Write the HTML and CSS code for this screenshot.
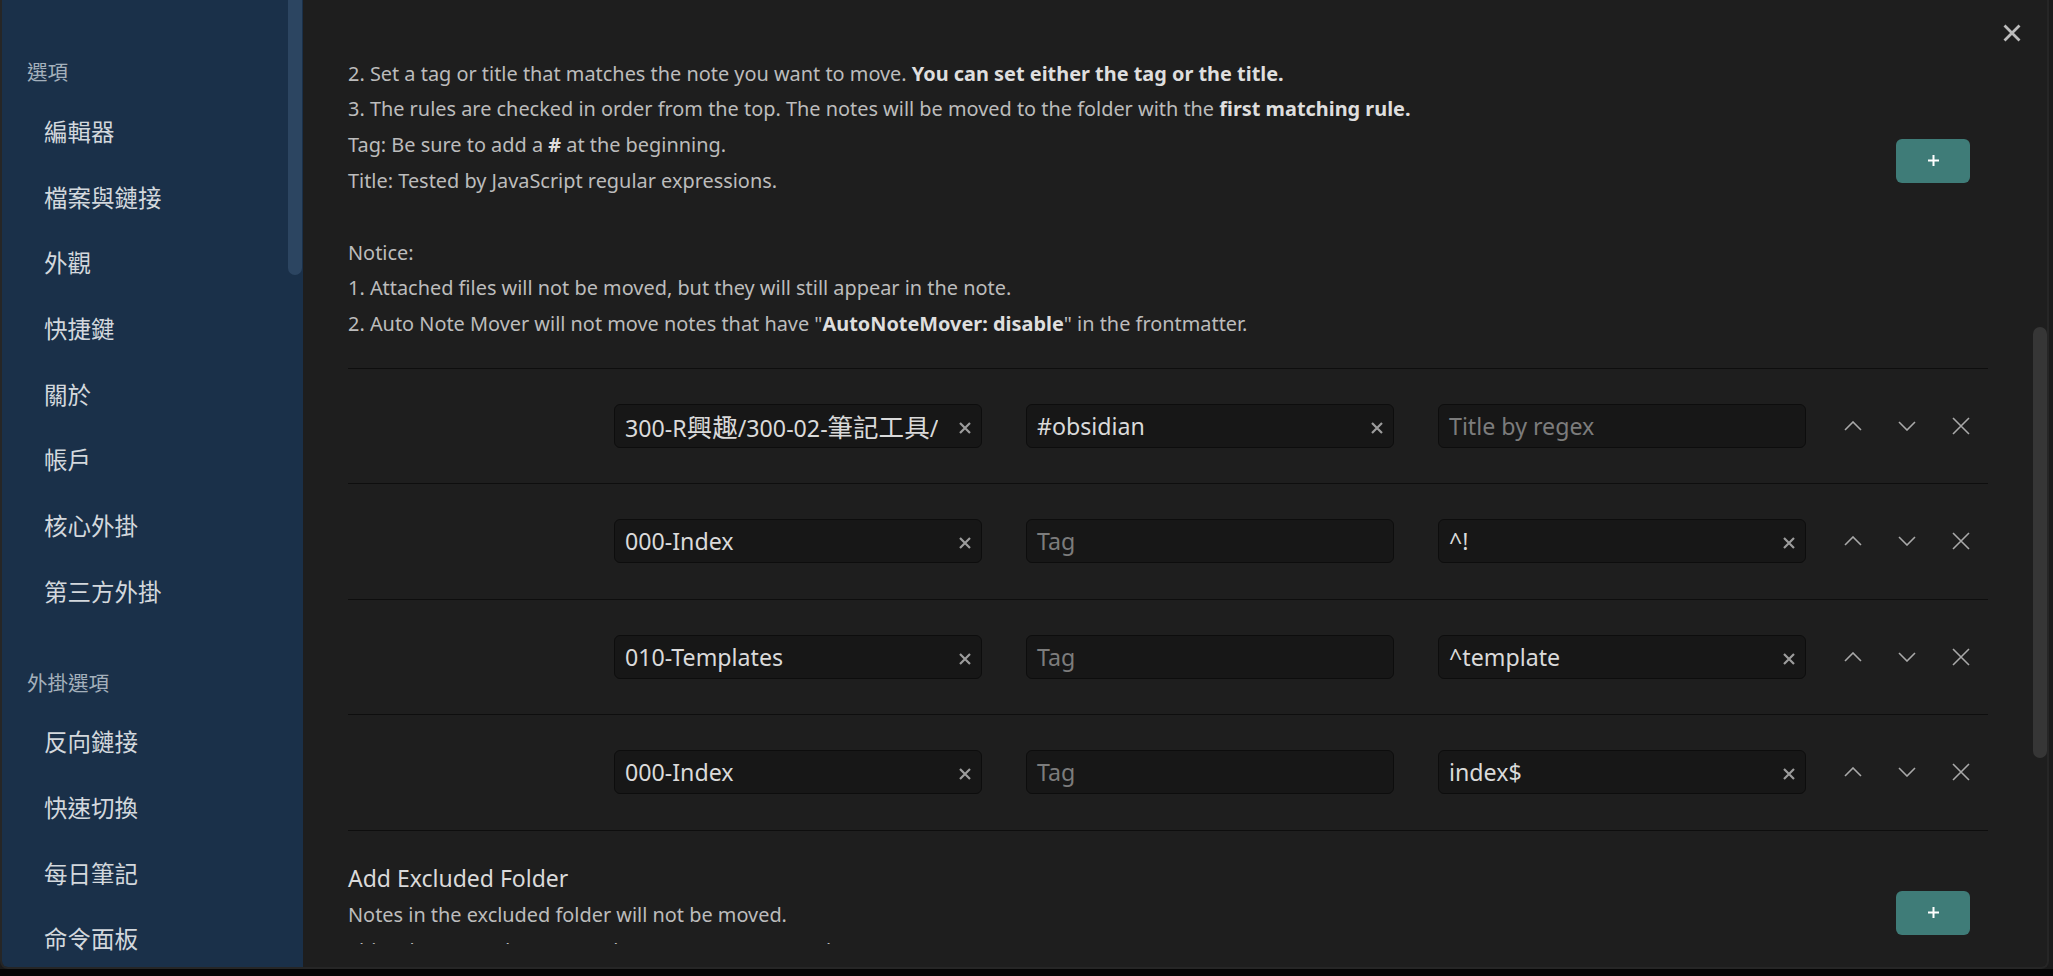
FILE: index.html
```html
<!DOCTYPE html>
<html lang="zh-Hant">
<head>
<meta charset="utf-8">
<title>Settings</title>
<link rel="stylesheet" href="styles.css">
</head>
<body>
<div class="modal">
  <nav class="sidebar">
    <div class="sb-thumb"></div>
    <div class="nav-group first">
      <div class="nav-header">選項</div>
      <div class="nav-item">編輯器</div>
      <div class="nav-item">檔案與鏈接</div>
      <div class="nav-item">外觀</div>
      <div class="nav-item">快捷鍵</div>
      <div class="nav-item">關於</div>
      <div class="nav-item">帳戶</div>
      <div class="nav-item">核心外掛</div>
      <div class="nav-item">第三方外掛</div>
    </div>
    <div class="nav-group">
      <div class="nav-header">外掛選項</div>
      <div class="nav-item">反向鏈接</div>
      <div class="nav-item">快速切換</div>
      <div class="nav-item">每日筆記</div>
      <div class="nav-item">命令面板</div>
    </div>
  </nav>

  <main class="content">
    <div class="scroll">
      <div class="scroll-inner">
        <div class="setting-item head-item">
          <div class="info">
            <div class="name">Add new rule</div>
            <div class="desc">
              <div>1. Set the destination folder.</div>
              <div>2. Set a tag or title that matches the note you want to move. <b>You can set either the tag or the title.</b></div>
              <div>3. The rules are checked in order from the top. The notes will be moved to the folder with the <b>first matching rule.</b></div>
              <div>Tag: Be sure to add a <b>#</b> at the beginning.</div>
              <div>Title: Tested by JavaScript regular expressions.</div>
              <div class="blank"></div>
              <div>Notice:</div>
              <div>1. Attached files will not be moved, but they will still appear in the note.</div>
              <div>2. Auto Note Mover will not move notes that have "<b>AutoNoteMover: disable</b>" in the frontmatter.</div>
            </div>
          </div>
          <div class="control">
            <button class="btn-plus"><svg width="11" height="11" viewBox="0 0 11 11"><path d="M5.5 0v11M0 5.5h11" stroke="#fff" stroke-width="2"/></svg></button>
          </div>
        </div>

        <div class="setting-item rule">
          <div class="info"></div>
          <div class="control">
            <div class="input"><span class="val">300-R<span class="cjk">興趣</span>/300-02-<span class="cjk">筆記工具</span>/</span><svg class="clear" width="12" height="12" viewBox="0 0 12 12"><path d="M1 1l10 10M11 1L1 11"/></svg></div>
            <div class="input"><span class="val">#obsidian</span><svg class="clear" width="12" height="12" viewBox="0 0 12 12"><path d="M1 1l10 10M11 1L1 11"/></svg></div>
            <div class="input"><span class="ph">Title by regex</span></div>
            <button class="icon-btn"><svg width="18" height="10" viewBox="0 0 18 10"><path d="M1 9L9 1l8 8"/></svg></button>
            <button class="icon-btn"><svg width="18" height="10" viewBox="0 0 18 10"><path d="M1 1l8 8 8-8"/></svg></button>
            <button class="icon-btn"><svg width="18" height="18" viewBox="0 0 18 18"><path d="M1 1l16 16M17 1L1 17"/></svg></button>
          </div>
        </div>

        <div class="setting-item rule">
          <div class="info"></div>
          <div class="control">
            <div class="input"><span class="val">000-Index</span><svg class="clear" width="12" height="12" viewBox="0 0 12 12"><path d="M1 1l10 10M11 1L1 11"/></svg></div>
            <div class="input"><span class="ph">Tag</span></div>
            <div class="input"><span class="val">^!</span><svg class="clear" width="12" height="12" viewBox="0 0 12 12"><path d="M1 1l10 10M11 1L1 11"/></svg></div>
            <button class="icon-btn"><svg width="18" height="10" viewBox="0 0 18 10"><path d="M1 9L9 1l8 8"/></svg></button>
            <button class="icon-btn"><svg width="18" height="10" viewBox="0 0 18 10"><path d="M1 1l8 8 8-8"/></svg></button>
            <button class="icon-btn"><svg width="18" height="18" viewBox="0 0 18 18"><path d="M1 1l16 16M17 1L1 17"/></svg></button>
          </div>
        </div>

        <div class="setting-item rule">
          <div class="info"></div>
          <div class="control">
            <div class="input"><span class="val">010-Templates</span><svg class="clear" width="12" height="12" viewBox="0 0 12 12"><path d="M1 1l10 10M11 1L1 11"/></svg></div>
            <div class="input"><span class="ph">Tag</span></div>
            <div class="input"><span class="val">^template</span><svg class="clear" width="12" height="12" viewBox="0 0 12 12"><path d="M1 1l10 10M11 1L1 11"/></svg></div>
            <button class="icon-btn"><svg width="18" height="10" viewBox="0 0 18 10"><path d="M1 9L9 1l8 8"/></svg></button>
            <button class="icon-btn"><svg width="18" height="10" viewBox="0 0 18 10"><path d="M1 1l8 8 8-8"/></svg></button>
            <button class="icon-btn"><svg width="18" height="18" viewBox="0 0 18 18"><path d="M1 1l16 16M17 1L1 17"/></svg></button>
          </div>
        </div>

        <div class="setting-item rule">
          <div class="info"></div>
          <div class="control">
            <div class="input"><span class="val">000-Index</span><svg class="clear" width="12" height="12" viewBox="0 0 12 12"><path d="M1 1l10 10M11 1L1 11"/></svg></div>
            <div class="input"><span class="ph">Tag</span></div>
            <div class="input"><span class="val">index$</span><svg class="clear" width="12" height="12" viewBox="0 0 12 12"><path d="M1 1l10 10M11 1L1 11"/></svg></div>
            <button class="icon-btn"><svg width="18" height="10" viewBox="0 0 18 10"><path d="M1 9L9 1l8 8"/></svg></button>
            <button class="icon-btn"><svg width="18" height="10" viewBox="0 0 18 10"><path d="M1 1l8 8 8-8"/></svg></button>
            <button class="icon-btn"><svg width="18" height="18" viewBox="0 0 18 18"><path d="M1 1l16 16M17 1L1 17"/></svg></button>
          </div>
        </div>

        <div class="setting-item head-item">
          <div class="info">
            <div class="name">Add Excluded Folder</div>
            <div class="desc">
              <div>Notes in the excluded folder will not be moved.</div>
              <div>This takes precedence over the notes movement rules.</div>
            </div>
          </div>
          <div class="control">
            <button class="btn-plus"><svg width="11" height="11" viewBox="0 0 11 11"><path d="M5.5 0v11M0 5.5h11" stroke="#fff" stroke-width="2"/></svg></button>
          </div>
        </div>
      </div>
    </div>
    <div class="content-thumb"></div>
  </main>

  <button class="close-btn"><svg width="18" height="18" viewBox="0 0 18 18"><path d="M1.5 1.5l15 15M16.5 1.5l-15 15"/></svg></button>
</div>
</body>
</html>
```

FILE: styles.css
```css
html, body {
  margin: 0;
  padding: 0;
}
body {
  background: linear-gradient(to bottom, #1b1b1b 969px, #050505 969px);
  width: 2053px;
  height: 976px;
  overflow: hidden;
  font-family: "Noto Sans", "Noto Sans CJK TC", sans-serif;
}
.modal {
  position: relative;
  width: 2045px;
  height: 967px;
  display: flex;
  border: 2px solid #262626;
  border-top: none;
  border-radius: 0 0 8px 8px;
  overflow: hidden;
  background: #1e1e1e;
}

/* sidebar */
.sidebar {
  position: relative;
  width: 301px;
  flex: none;
  background: #1a3049;
  padding-top: 48px;
  box-sizing: border-box;
}
.sb-thumb {
  position: absolute;
  right: 1px;
  top: -8px;
  width: 14px;
  height: 283px;
  border-radius: 7px;
  background: #2c4561;
}
.nav-group + .nav-group {
  margin-top: 35px;
}
.nav-header {
  font-family: "Noto Sans CJK TC", sans-serif;
  font-size: 20.5px;
  line-height: 46px;
  color: #a4b0bc;
  padding-left: 25px;
  margin-bottom: 4px;
}
.nav-item {
  font-family: "Noto Sans CJK TC", sans-serif;
  font-size: 23.5px;
  line-height: 32px;
  padding: 16.85px 0 16.85px 42px;
  color: #d3d8dd;
}

/* content */
.content {
  position: relative;
  flex: 1;
  display: flex;
  flex-direction: column;
  padding: 54px 0 23px;
  min-width: 0;
}
.scroll {
  flex: 1;
  overflow: hidden;
}
.scroll-inner {
  margin-top: -100.2px;
  padding: 0 59px 0 45px;
}
.content-thumb {
  position: absolute;
  right: 0;
  top: 327px;
  width: 14px;
  height: 431px;
  border-radius: 7px;
  background: #363636;
}

.setting-item {
  display: flex;
  align-items: center;
  border-top: 1px solid #0e0e0e;
}
.setting-item:first-child {
  border-top: none;
}
.head-item .info {
  padding: 32px 0 26px;
}
.info {
  flex: 1;
  min-width: 0;
}
.name {
  font-size: 23px;
  line-height: 30px;
  color: #dadada;
  margin-bottom: 4px;
}
.desc {
  font-size: 19.9px;
  line-height: 35.8px;
  color: #bcbcbc;
}
.desc b {
  color: #dedede;
  font-weight: 700;
}
.desc .blank {
  height: 35.8px;
}
.control {
  display: flex;
  align-items: center;
}
.btn-plus {
  width: 74px;
  height: 44px;
  border: none;
  border-radius: 6px;
  background: #3f7c78;
  margin-right: 18px;
  display: flex;
  align-items: center;
  justify-content: center;
  padding: 0;
}

.rule {
  padding: 35px 0 35.5px;
}
.input {
  position: relative;
  width: 368px;
  height: 44px;
  box-sizing: border-box;
  border: 1px solid #0d0d0d;
  border-radius: 6px;
  background: #171717;
  display: flex;
  align-items: center;
  padding: 0 28px 0 10px;
  overflow: hidden;
  font-size: 23.2px;
  white-space: nowrap;
}
.input + .input {
  margin-left: 44px;
}
.val {
  color: #dadada;
  overflow: hidden;
}
.cjk {
  font-size: 1.1em;
}
.ph {
  color: #7c7c7c;
}
.clear {
  position: absolute;
  right: 10px;
  top: 17px;
  fill: none;
  stroke: #9c9c9c;
  stroke-width: 2.2;
}
.icon-btn {
  width: 54px;
  height: 36px;
  border: none;
  background: transparent;
  padding: 0;
  display: flex;
  align-items: center;
  justify-content: center;
}
.input + .icon-btn {
  margin-left: 20px;
}
.icon-btn svg {
  fill: none;
  stroke: #a9a9a9;
  stroke-width: 1.6;
}

.close-btn {
  position: absolute;
  top: 20px;
  right: 22px;
  width: 26px;
  height: 26px;
  border: none;
  background: transparent;
  padding: 0;
  display: flex;
  align-items: center;
  justify-content: center;
}
.close-btn svg {
  fill: none;
  stroke: #bdbdbd;
  stroke-width: 2.8;
}
```
